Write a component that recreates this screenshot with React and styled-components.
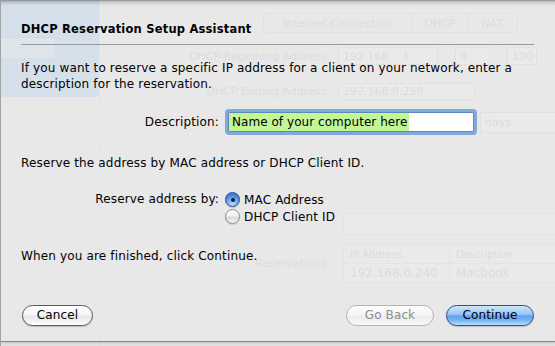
import React from "react";
import styled, { createGlobalStyle } from "styled-components";

const Global = createGlobalStyle`
  html, body { margin: 0; padding: 0; background: #e8e8e8; }
  body { width: 555px; height: 346px; overflow: hidden; font-family: "DejaVu Sans", "Liberation Sans", sans-serif; }
`;

const Window = styled.div`
  position: relative;
  width: 555px;
  height: 346px;
  overflow: hidden;
  background: #e8e8e8;
  border-left: 1px solid #a4a4a4;
  box-sizing: border-box;
`;

/* ---------- faint window content behind the sheet ---------- */
const Backdrop = styled.div`
  display: grid;
  grid-template-columns: 99px 1fr;
  height: 100%;
  color: #dcdcdc;
  font-size: 11px;
`;

const Sidebar = styled.div`
  display: flex;
  flex-direction: column;
  border-right: 1px solid #e3e3e3;
`;

const SidebarBlue = styled.div`
  height: 97px;
  background: #d6e0eb;
  padding-top: 37px;
  box-sizing: border-box;
`;

const SidebarItem = styled.div`
  width: 53px;
  height: 20px;
  background: #dfe5eb;
  border-top: 1px solid #d3d8dd;
`;

const Main = styled.div`
  display: flex;
  flex-direction: column;
  padding-top: 13px;
`;

const GhostTabs = styled.div`
  display: flex;
  margin-left: 163px;
  width: 255px;
  height: 20px;
  border: 1px solid #e1e1e1;
  border-radius: 4px;
  box-sizing: border-box;
`;

const GhostTab = styled.div`
  flex: ${(p) => p.$grow};
  display: flex;
  align-items: center;
  justify-content: center;
  border-left: ${(p) => (p.$first ? "none" : "1px solid #e1e1e1")};
`;

const GhostRow = styled.div`
  display: grid;
  grid-template-columns: 230px 1fr;
  column-gap: 8px;
  align-items: center;
  margin-top: ${(p) => p.$mt}px;
  height: ${(p) => p.$h}px;
`;

const GhostLabel = styled.div`
  text-align: right;
  white-space: nowrap;
`;

const GhostFields = styled.div`
  display: flex;
  align-items: center;
  gap: ${(p) => p.$gap || 0}px;
  height: 100%;
  margin-left: ${(p) => p.$ml || 0}px;
`;

const GhostBox = styled.div`
  width: ${(p) => p.$w}px;
  height: 100%;
  border: 1px solid #e1e1e1;
  background: #eaeaea;
  box-sizing: border-box;
  display: flex;
  align-items: center;
  padding-left: 4px;
`;

const GhostRule = styled.div`
  margin-top: ${(p) => p.$mt}px;
  height: 1px;
  background: #e3e3e3;
`;

const GhostPanel = styled.div`
  margin-top: ${(p) => p.$mt}px;
  margin-left: 243px;
  height: ${(p) => p.$h}px;
  border: 1px solid #e3e3e3;
  border-right: none;
  background: #e9e9e9;
`;

const GhostTable = styled.div`
  display: grid;
  grid-template-columns: 105px 1fr;
  margin-left: 5px;
  border: 1px solid #e3e3e3;
  border-right: none;
  background: #eaeaea;
`;

const GhostCell = styled.div`
  height: 18px;
  display: flex;
  align-items: center;
  padding-left: 6px;
  border-left: ${(p) => (p.$divider ? "1px solid #e3e3e3" : "none")};
  border-bottom: ${(p) => (p.$head ? "1px solid #e3e3e3" : "none")};
  font-size: ${(p) => (p.$head ? 10 : 12)}px;
`;

/* ---------- the sheet ---------- */
const Sheet = styled.div`
  position: absolute;
  left: 0;
  top: 0;
  right: 0;
  height: 342px;
  box-sizing: border-box;
  border-bottom: 1px solid #8a8a8a;
  box-shadow: 0 1px 0 #c9c9c9, 0 3px 3px rgba(0, 0, 0, 0.08);
  background: linear-gradient(rgba(0, 0, 0, 0.38), rgba(0, 0, 0, 0.12) 2px, rgba(0, 0, 0, 0) 6px);
  padding: 22px 21px 15px 20px;
  display: flex;
  flex-direction: column;
  color: #000;
  font-family: "DejaVu Sans", "Liberation Sans", sans-serif;
  font-size: 12px;
  letter-spacing: 0.15px;
`;

const Title = styled.div`
  font-weight: bold;
  font-size: 11.5px;
  line-height: 14px;
  letter-spacing: 0.2px;
`;

const Separator = styled.div`
  margin-top: 8px;
  height: 1px;
  background: #9a9a9a;
`;

const Para = styled.p`
  margin: ${(p) => p.$mt}px 0 0;
  line-height: 16px;
`;

const FormRow = styled.div`
  display: grid;
  grid-template-columns: 198px auto;
  column-gap: 6px;
  align-items: ${(p) => p.$align || "center"};
  margin-top: ${(p) => p.$mt}px;
`;

const Label = styled.div`
  text-align: right;
  line-height: 17px;
  white-space: nowrap;
`;

const FocusRing = styled.div`
  width: 252px;
  height: 26px;
  box-sizing: border-box;
  border: 3px solid #83a9da;
  border-radius: 4px;
  background: #fff;
  box-shadow: inset 0 0 0 1px #5f87bd;
  display: flex;
  align-items: stretch;
  padding: 1px 1px;
`;

const Selected = styled.span`
  background: #c2f797;
  padding: 0 2px 0 3px;
  line-height: 18px;
  font-size: 12px;
  letter-spacing: 0.05px;
  white-space: nowrap;
`;

const RadioList = styled.div`
  display: flex;
  flex-direction: column;
`;

const RadioRow = styled.label`
  display: flex;
  align-items: center;
  gap: 4px;
  height: 17px;
  white-space: nowrap;
`;

const RadioDot = styled.span`
  position: relative;
  width: 15px;
  height: 15px;
  box-sizing: border-box;
  border-radius: 50%;
  border: 1px solid ${(p) => (p.$on ? "#35598f" : "#8a8a8a")};
  background: ${(p) =>
    p.$on
      ? "radial-gradient(circle at 50% 85%, #b8dcff 0%, #6aa5ea 45%, #3d7fd6 75%), #5b97e2"
      : "linear-gradient(#ffffff 0%, #f2f2f2 45%, #d9d9d9 55%, #f6f6f6 100%)"};
  box-shadow: 0 1px 1px rgba(0, 0, 0, 0.15);
  &::after {
    content: "";
    display: ${(p) => (p.$on ? "block" : "none")};
    position: absolute;
    left: 4.5px;
    top: 4.5px;
    width: 4px;
    height: 4px;
    border-radius: 50%;
    background: #0f1d33;
  }
`;

const ButtonBar = styled.div`
  margin-top: auto;
  display: flex;
  align-items: center;
  padding-left: 1px;
`;

const Spacer = styled.div`
  flex: 1;
`;

const Button = styled.button`
  width: ${(p) => p.$w}px;
  height: 21px;
  margin-left: ${(p) => p.$ml || 0}px;
  border-radius: 11px;
  padding: 0;
  font-family: "DejaVu Sans", "Liberation Sans", sans-serif;
  font-size: 12px;
  letter-spacing: 0.1px;
  line-height: 19px;
  box-sizing: border-box;
  color: ${(p) => (p.$variant === "disabled" ? "#8c8c8c" : "#000")};
  border: 1px solid
    ${(p) => (p.$variant === "default" ? "#2d4f8e" : p.$variant === "disabled" ? "#b3b3b3" : "#5c5c5c")};
  background: ${(p) =>
    p.$variant === "default"
      ? "linear-gradient(#d0e6fc 0%, #95c3f5 45%, #5f9fec 52%, #78b3f2 75%, #bcdffd 100%)"
      : p.$variant === "disabled"
      ? "linear-gradient(#fdfdfd 0%, #f4f4f4 50%, #ececec 52%, #f7f7f7 100%)"
      : "linear-gradient(#ffffff 0%, #f7f7f7 48%, #e6e6e6 52%, #f3f3f3 80%, #ffffff 100%)"};
  box-shadow: ${(p) => (p.$variant === "disabled" ? "none" : "0 1px 1px rgba(0,0,0,0.18)")};
`;

export default function App() {
  return (
    <>
      <Global />
      <Window>
        <Backdrop aria-hidden="true">
          <Sidebar>
            <SidebarBlue>
              <SidebarItem />
            </SidebarBlue>
          </Sidebar>
          <Main>
            <GhostTabs>
              <GhostTab $grow={150} $first>Internet Connection</GhostTab>
              <GhostTab $grow={55}>DHCP</GhostTab>
              <GhostTab $grow={50}>NAT</GhostTab>
            </GhostTabs>
            <GhostRow $mt={14} $h={18}>
              <GhostLabel>DHCP Beginning Address:</GhostLabel>
              <GhostFields $gap={17}>
                <GhostBox $w={100}>192.168 .&nbsp;&nbsp;1</GhostBox>
                <GhostBox $w={35}>0</GhostBox>
                <GhostBox $w={30}>100</GhostBox>
              </GhostFields>
            </GhostRow>
            <GhostRow $mt={18} $h={17}>
              <GhostLabel>DHCP Ending Address:</GhostLabel>
              <GhostFields>
                <GhostBox $w={137}>192.168.0.250</GhostBox>
              </GhostFields>
            </GhostRow>
            <GhostRow $mt={12} $h={21}>
              <GhostLabel />
              <GhostFields $ml={142}>
                <GhostBox $w={80}>days</GhostBox>
              </GhostFields>
            </GhostRow>
            <GhostRule $mt={17} />
            <GhostPanel $mt={62} $h={20} />
            <GhostRow $mt={9} $h={38}>
              <GhostLabel>Reservations:</GhostLabel>
              <GhostTable>
                <GhostCell $head>IP Address</GhostCell>
                <GhostCell $head $divider>Description</GhostCell>
                <GhostCell>192.168.0.240</GhostCell>
                <GhostCell $divider>Macbook</GhostCell>
              </GhostTable>
            </GhostRow>
          </Main>
        </Backdrop>

        <Sheet>
          <Title>DHCP Reservation Setup Assistant</Title>
          <Separator />
          <Para $mt={15}>
            If you want to reserve a specific IP address for a client on your network, enter a
            <br />
            description for the reservation.
          </Para>
          <FormRow $mt={17}>
            <Label>Description:</Label>
            <FocusRing>
              <Selected>Name of your computer here</Selected>
            </FocusRing>
          </FormRow>
          <Para $mt={20}>Reserve the address by MAC address or DHCP Client ID.</Para>
          <FormRow $mt={20} $align="start">
            <Label>Reserve address by:</Label>
            <RadioList>
              <RadioRow>
                <RadioDot $on />
                MAC Address
              </RadioRow>
              <RadioRow>
                <RadioDot />
                DHCP Client ID
              </RadioRow>
            </RadioList>
          </FormRow>
          <Para $mt={23}>When you are finished, click Continue.</Para>
          <ButtonBar>
            <Button $w={71}>Cancel</Button>
            <Spacer />
            <Button $w={88} $variant="disabled" disabled>
              Go Back
            </Button>
            <Button $w={88} $ml={12} $variant="default">
              Continue
            </Button>
          </ButtonBar>
        </Sheet>
      </Window>
    </>
  );
}
